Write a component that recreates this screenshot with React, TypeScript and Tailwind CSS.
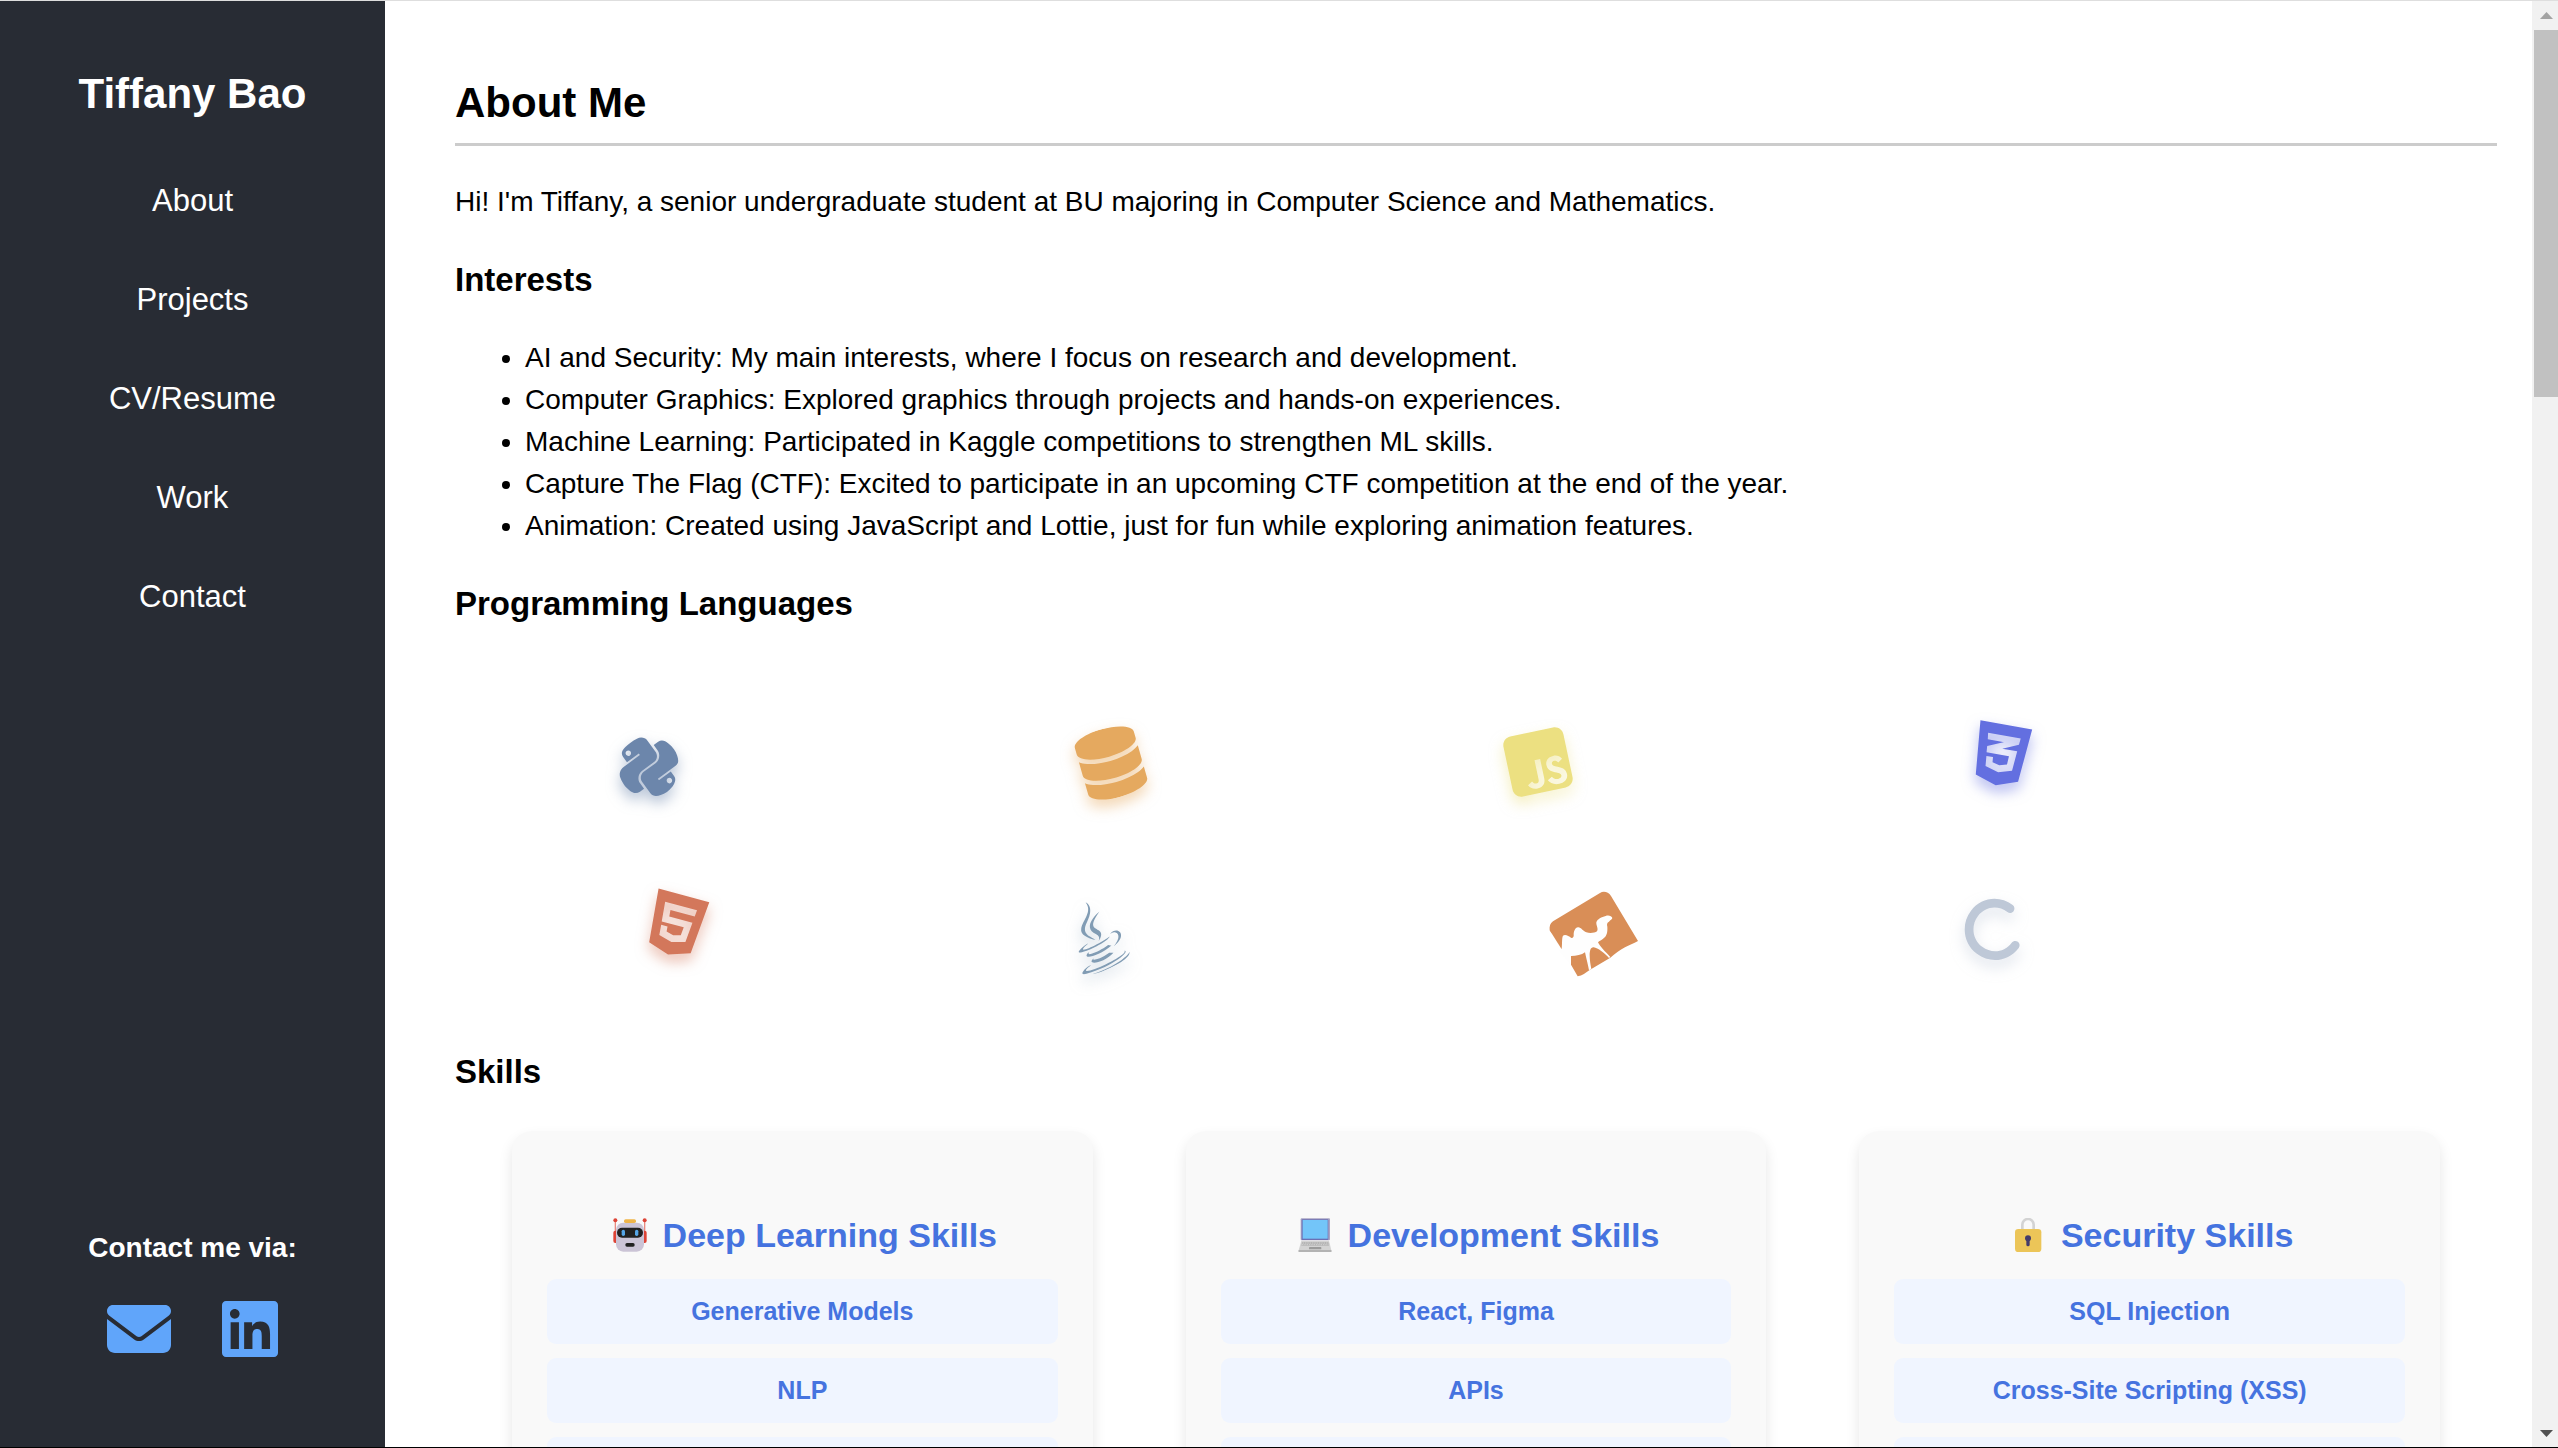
import type { ReactNode } from "react";
import {
  FaC,
  FaCss3Alt,
  FaDatabase,
  FaEnvelope,
  FaHtml5,
  FaJava,
  FaLinkedin,
  FaPython,
  FaSquareJs,
} from "react-icons/fa6";

const NAV = ["About", "Projects", "CV/Resume", "Work", "Contact"];

const INTERESTS = [
  "AI and Security: My main interests, where I focus on research and development.",
  "Computer Graphics: Explored graphics through projects and hands-on experiences.",
  "Machine Learning: Participated in Kaggle competitions to strengthen ML skills.",
  "Capture The Flag (CTF): Excited to participate in an upcoming CTF competition at the end of the year.",
  "Animation: Created using JavaScript and Lottie, just for fun while exploring animation features.",
];

function Robot() {
  return (
    <svg viewBox="0 0 102 102" className="h-[34px] w-[34px]" aria-hidden="true">
      <rect x="5" y="8" width="4" height="40" fill="#e98a80" />
      <rect x="93" y="8" width="4" height="40" fill="#e98a80" />
      <circle cx="7" cy="7" r="6" fill="#dd4437" />
      <circle cx="95" cy="7" r="6" fill="#dd4437" />
      <rect x="1" y="38" width="14" height="37" rx="6" fill="#dd4437" />
      <rect x="87" y="38" width="14" height="37" rx="6" fill="#dd4437" />
      <rect x="9" y="14" width="84" height="87" rx="22" fill="#cbc4d6" />
      <rect x="33" y="4" width="36" height="11" rx="5" fill="#efb549" />
      <rect x="12" y="29" width="78" height="30" rx="15" fill="#212121" />
      <rect x="26" y="35" width="10" height="19" rx="5" fill="#55a5e6" />
      <rect x="66" y="35" width="10" height="19" rx="5" fill="#55a5e6" />
      <rect x="37" y="75" width="28" height="11" rx="5" fill="#212121" />
    </svg>
  );
}

function Laptop() {
  return (
    <svg viewBox="0 0 102 102" className="h-[34px] w-[34px]" aria-hidden="true">
      <rect x="8" y="1" width="88" height="66" rx="3" fill="#a8a4c4" />
      <rect x="11" y="4" width="80" height="62" rx="2" fill="#6c70b4" />
      <rect x="14" y="6" width="75" height="56" fill="#73c5f9" />
      <path d="M10 68h83l7 29H2z" fill="#d3d3d3" />
      <path d="M12 72h79l2 11H10z" fill="#b4b4b4" />
      <path d="M14 75h75M12 80h79" stroke="#dedede" strokeWidth="2" strokeDasharray="4 3" />
      <rect x="33" y="87" width="37" height="7" rx="2" fill="#9b9b9b" />
      <rect x="1" y="96" width="100" height="6" rx="2" fill="#b3b3b3" />
    </svg>
  );
}

function Lock() {
  return (
    <svg viewBox="0 0 102 102" className="h-[34px] w-[34px]" aria-hidden="true">
      <path d="M34 36V20a17 17 0 0 1 34 0v16" fill="none" stroke="#d3d3d3" strokeWidth="8" />
      <rect x="12" y="33" width="79" height="69" rx="10" fill="#ecc558" />
      <circle cx="51" cy="61" r="9" fill="#433b6b" />
      <rect x="46" y="62" width="10" height="23" rx="5" fill="#433b6b" />
    </svg>
  );
}

function Camel() {
  return (
    <svg viewBox="50 60 282 264" className="h-[88px] w-[94px]" role="img" aria-label="Perl">
      <path
        fill="#d98e57"
        d="M68 154 209 69C220 62 234 66 242 78L323 213C310 220 296 226 284 232C268 240 254 252 240 263L178 300C166 308 156 317 142 319L122 284V258L58 181C57 170 59 160 68 154Z"
      />
      <path fill="#d98e57" d="M58 181 94 238 125 250 130 190Z" />
      <path
        fill="#fefefe"
        d="M94 236C96 220 94 204 98 197C104 191 116 198 122 203C128 206 131 201 130 193C131 183 134 173 143 172C152 171 158 184 168 187C178 191 194 189 200 184C205 176 197 167 198 157C201 147 214 141 226 138C235 135 244 138 246 144C245 149 240 149 236 155C230 158 229 162 231 170C232 185 230 197 220 205C214 210 207 213 203 217C208 229 226 246 240 261L236 264C222 249 203 234 190 232C181 231 178 242 178 256C178 272 181 286 183 297L176 301C173 284 168 266 164 247C154 255 138 258 122 258V284L84 240Z"
      />
    </svg>
  );
}

type Lang = { name: string; place: string; icon: ReactNode };

const LANGS: Lang[] = [
  {
    name: "Python",
    place: "left-[7.8%] top-[103px] text-[#6c86ab] drop-shadow-[0_7px_7px_#6c86ab80]",
    icon: <FaPython className="-rotate-36" />,
  },
  {
    name: "SQL",
    place: "left-[30.4%] top-[99px] text-[#e5a95f] drop-shadow-[0_7px_7px_#e5a95f80]",
    icon: <FaDatabase className="-rotate-16" />,
  },
  {
    name: "JavaScript",
    place: "left-[51.3%] top-[98px] text-[#ece081] drop-shadow-[0_7px_7px_#ece08180]",
    icon: <FaSquareJs className="-rotate-12" />,
  },
  {
    name: "CSS",
    place: "left-[74%] top-[91px] text-[#636fe0] drop-shadow-[0_7px_7px_#636fe080]",
    icon: <FaCss3Alt className="rotate-10" />,
  },
  {
    name: "HTML",
    place: "left-[9.1%] top-[261px] text-[#d3775b] drop-shadow-[0_7px_7px_#d3775b80]",
    icon: <FaHtml5 className="rotate-15" />,
  },
  {
    name: "Java",
    place: "left-[29.6%] top-[273px] text-[#819cb4] drop-shadow-[0_7px_7px_#819cb480]",
    icon: <FaJava className="-rotate-25" />,
  },
  { name: "Perl", place: "left-[53.5%] top-[261px]", icon: <Camel /> },
  {
    name: "C",
    place: "left-[73.5%] top-[266px] text-[#bec8d7] drop-shadow-[0_7px_7px_#bec8d780]",
    icon: <FaC className="-rotate-8" />,
  },
];

const CARDS = [
  { icon: <Robot />, title: "Deep Learning Skills", items: ["Generative Models", "NLP"] },
  { icon: <Laptop />, title: "Development Skills", items: ["React, Figma", "APIs"] },
  { icon: <Lock />, title: "Security Skills", items: ["SQL Injection", "Cross-Site Scripting (XSS)"] },
];

function Sidebar() {
  return (
    <aside className="flex w-[385px] shrink-0 flex-col items-center bg-[#282c34] pt-[61px] pb-[86px] text-white">
      <h1 className="text-[42px] leading-[63px] font-bold">Tiffany Bao</h1>
      <nav className="mt-[53px]">
        <ul className="flex flex-col items-center gap-[53px] text-[31px] leading-[46px]">
          {NAV.map((label) => (
            <li key={label}>
              <a href={`#${label.toLowerCase()}`}>{label}</a>
            </li>
          ))}
        </ul>
      </nav>
      <div className="mt-auto flex flex-col items-center gap-7">
        <p className="text-[28px] leading-[42px] font-bold">Contact me via:</p>
        <div className="flex gap-[51px] text-[64px] text-[#60a5fa]">
          <a href="#email" aria-label="Email">
            <FaEnvelope />
          </a>
          <a href="#linkedin" aria-label="LinkedIn">
            <FaLinkedin className="w-14" />
          </a>
        </div>
      </div>
    </aside>
  );
}

function SkillCard({ icon, title, items }: { icon: ReactNode; title: string; items: string[] }) {
  return (
    <article className="rounded-[20px] bg-[#f9f9f9] px-[35px] pt-[78px] pb-[35px] text-center font-bold text-[#4573df] shadow-[0_7px_14px_#0000001a]">
      <h4 className="flex items-center justify-center gap-[10px] text-[34px] leading-[52px]">
        <span className="flex w-[45px] justify-center">{icon}</span>
        {title}
      </h4>
      <ul className="mt-[18px] flex flex-col gap-[14px] text-[25px] leading-[37px]">
        {items.map((item) => (
          <li key={item} className="rounded-[9px] bg-[#f0f5ff] p-[14px]">
            {item}
          </li>
        ))}
        <li className="h-[65px] rounded-[9px] bg-[#f0f5ff]" />
      </ul>
    </article>
  );
}

function Scrollbar() {
  return (
    <div className="flex w-[26px] shrink-0 flex-col items-end bg-[#f1f1f1]">
      <button type="button" aria-label="Scroll up" className="flex h-[29px] w-6 items-center justify-center">
        <svg viewBox="0 0 13 7" className="h-[7px] w-[13px]">
          <path d="M0 7 6.500 0 13 7z" fill="#a3a3a3" />
        </svg>
      </button>
      <div className="h-[367px] w-6 bg-[#c1c1c1]" />
      <button type="button" aria-label="Scroll down" className="mt-auto flex h-[27px] w-6 items-center justify-center">
        <svg viewBox="0 0 13 7" className="h-[7px] w-[13px]">
          <path d="M0 0h13L6.500 7z" fill="#505050" />
        </svg>
      </button>
    </div>
  );
}

export default function App() {
  return (
    <div className="flex h-screen overflow-hidden border-t border-b border-t-[#dedede] border-b-black bg-white font-['Liberation_Sans',Arial,sans-serif] text-[28px] leading-[42px] text-black">
      <Sidebar />
      <main className="min-w-0 flex-1 overflow-hidden pt-[70px] pr-[35px] pl-[70px]">
        <h2 className="border-b-3 border-[#cccccc] pb-[9px] text-[42px] leading-[63px] font-bold">About Me</h2>
        <p className="mt-[35px]">
          Hi! I'm Tiffany, a senior undergraduate student at BU majoring in Computer Science and Mathematics.
        </p>
        <h3 className="mt-8 text-[33px] leading-[50px] font-bold">Interests</h3>
        <ul className="mt-8 list-disc pl-[70px]">
          {INTERESTS.map((text) => (
            <li key={text}>{text}</li>
          ))}
        </ul>
        <h3 className="mt-8 text-[33px] leading-[50px] font-bold">Programming Languages</h3>
        <ul className="relative h-[418px]">
          {LANGS.map(({ name, place, icon }) => (
            <li
              key={name}
              title={name}
              className={`absolute flex min-h-[70px] min-w-[70px] items-center justify-center text-[70px] ${place}`}
            >
              {icon}
            </li>
          ))}
        </ul>
        <h3 className="text-[33px] leading-[50px] font-bold">Skills</h3>
        <div className="mt-[34px] grid grid-cols-3 gap-[93px] px-[57px]">
          {CARDS.map((card) => (
            <SkillCard key={card.title} {...card} />
          ))}
        </div>
      </main>
      <Scrollbar />
    </div>
  );
}
